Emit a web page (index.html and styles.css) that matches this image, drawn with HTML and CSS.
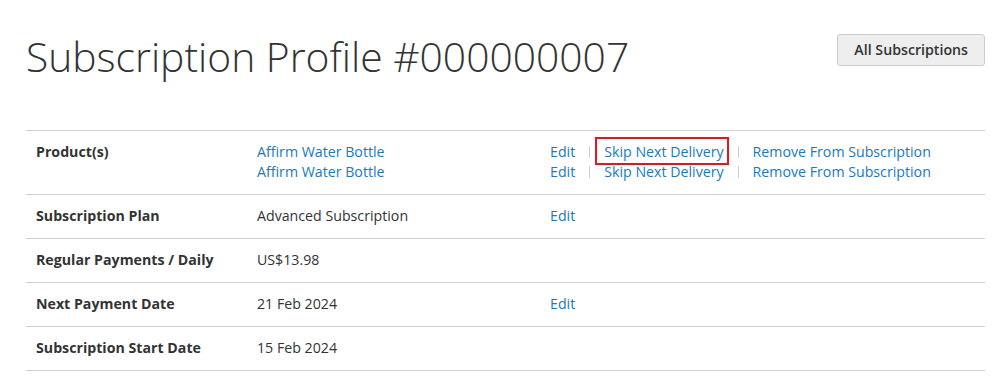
FILE: index.html
```html
<!DOCTYPE html>
<html>
<head>
<meta charset="utf-8">
<link rel="stylesheet" href="styles.css">
</head>
<body>
<div class="page">
  <div class="page-head">
    <h1 class="page-title">Subscription Profile #000000007</h1>
    <button class="btn">All Subscriptions</button>
  </div>
  <table class="profile">
    <tbody>
      <tr>
        <th>Product(s)</th>
        <td class="val">
          <a href="#">Affirm Water Bottle</a><br>
          <a href="#">Affirm Water Bottle</a>
        </td>
        <td class="acts">
          <div class="act-line"><a href="#">Edit</a><span class="sep"></span><a href="#" class="hl">Skip Next Delivery</a><span class="sep"></span><a href="#">Remove From Subscription</a></div>
          <div class="act-line"><a href="#">Edit</a><span class="sep"></span><a href="#">Skip Next Delivery</a><span class="sep"></span><a href="#">Remove From Subscription</a></div>
        </td>
      </tr>
      <tr>
        <th>Subscription Plan</th>
        <td class="val">Advanced Subscription</td>
        <td class="acts"><a href="#">Edit</a></td>
      </tr>
      <tr>
        <th>Regular Payments / Daily</th>
        <td class="val">US$13.98</td>
        <td class="acts"></td>
      </tr>
      <tr>
        <th>Next Payment Date</th>
        <td class="val">21 Feb 2024</td>
        <td class="acts"><a href="#">Edit</a></td>
      </tr>
      <tr>
        <th>Subscription Start Date</th>
        <td class="val">15 Feb 2024</td>
        <td class="acts"></td>
      </tr>
    </tbody>
  </table>
</div>
</body>
</html>
```
FILE: styles.css
```css
html, body {
  margin: 0;
  padding: 0;
  background: #fff;
}
body {
  font-family: "Open Sans", "Liberation Sans", sans-serif;
  font-size: 14.2px;
  line-height: 20px;
  color: #333;
}
.page {
  width: 959px;
  padding: 0 0 0 26px;
}
.page-head {
  display: flex;
  justify-content: space-between;
  align-items: flex-start;
  padding-top: 30px;
  height: 100px;
  box-sizing: border-box;
}
.page-title {
  margin: 0;
  font-size: 40.8px;
  font-weight: 300;
  line-height: 52px;
  color: #333;
}
.btn {
  font-family: "Open Sans", "Liberation Sans", sans-serif;
  font-size: 14.2px;
  font-weight: 600;
  color: #333;
  background: #eee;
  border: 1px solid #ccc;
  border-radius: 3px;
  padding: 0 16px;
  height: 32px;
  margin-top: 4px;
  line-height: 30px;
}
.profile {
  width: 100%;
  border-collapse: collapse;
  margin-top: 30px;
}
.profile tr {
  border-top: 1px solid #d1d1d1;
  border-bottom: 1px solid #d1d1d1;
}
.profile th, .profile td {
  text-align: left;
  vertical-align: top;
  padding: 11px 10px 12px;
}
.profile th {
  width: 201px;
  font-weight: 700;
}
.profile td.val {
  width: 273px;
}
a {
  color: #1979c3;
  text-decoration: none;
}
.act-line {
  display: flex;
  align-items: center;
}
.sep {
  display: inline-block;
  width: 1px;
  height: 12px;
  background: #ccc;
  margin: 0 14px;
}
.hl {
  position: relative;
}
.hl::after {
  content: "";
  position: absolute;
  left: -9px;
  right: -5px;
  top: -5px;
  bottom: -3px;
  border: 2px solid #e8131b;
}
```
